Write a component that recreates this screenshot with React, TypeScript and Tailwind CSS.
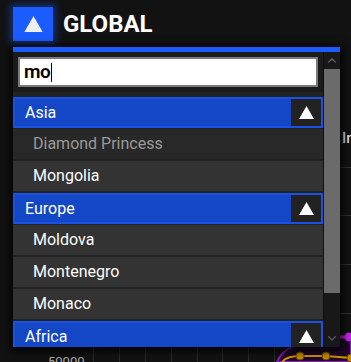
import React from 'react';

type Group = {
  name: string;
  items: { name: string; noData?: boolean }[];
};

const groups: Group[] = [
  { name: 'Asia', items: [{ name: 'Diamond Princess', noData: true }, { name: 'Mongolia' }] },
  { name: 'Europe', items: [{ name: 'Moldova' }, { name: 'Montenegro' }, { name: 'Monaco' }] },
  { name: 'Africa', items: [{ name: 'Morocco' }, { name: 'Mozambique' }] },
];

const UpTriangle = ({ className }: { className?: string }) => (
  <svg viewBox="0 0 16 14" className={className}>
    <polygon points="8,0 16,14 0,14" fill="currentColor" />
  </svg>
);

const App: React.FC = () => {
  return (
    <div className="relative flex flex-col w-[351px] h-[362px] overflow-hidden bg-[#121212] font-['Roboto',sans-serif]">
      {/* Header */}
      <div className="flex items-center gap-[10px] h-[47px] pl-[13px] pb-[6px] pt-[7px] shrink-0">
        <button className="flex items-center justify-center w-[40px] h-[34px] bg-[#1a5cff] text-[#eeeeee] shadow-[0_0_7px_3px_rgba(26,92,255,0.4)]">
          <UpTriangle className="w-[19px] h-[16px]" />
        </button>
        <span className="text-white font-bold text-[24px] leading-none">GLOBAL</span>
      </div>

      {/* Page content behind the dropdown */}
      <div className="flex flex-1 min-h-0">
        <div className="flex-1" />
        <div className="w-[11px] overflow-hidden text-[#dddddd]">
          <div className="h-[121px] pt-[82px] pl-[2px] border-b border-[#333] whitespace-nowrap text-[15px] font-medium leading-[18px]">
            Infected
          </div>
          <div className="h-[48px] border-b border-[#333]" />
          <div className="h-[49px] border-b border-[#333]" />
          <div className="h-[49px] border-b border-[#333]" />
        </div>
      </div>
      <svg width="351" height="45" className="block shrink-0">
        {[93, 119, 145, 171, 197, 222, 248, 274].map((x) => (
          <line key={x} x1={x + 0.5} y1="0" x2={x + 0.5} y2="45" stroke="#2a2a2a" strokeWidth="1" />
        ))}
        <path d="M277 45 C 282 32, 300 22, 330 20 L 351 20 L 351 45 Z" fill="#1d0828" stroke="#8e1cb8" strokeWidth="2" />
        <line x1="330" y1="20" x2="351" y2="20" stroke="#b320d8" strokeWidth="3" />
        <circle cx="349" cy="20" r="4.5" fill="#c624e8" />
        <path d="M282 45 C 286 40, 292 39, 300 39 L 326 39 L 351 41" fill="none" stroke="#d99a00" strokeWidth="2" />
        <circle cx="300" cy="39" r="4" fill="#c88c00" stroke="#6b4a00" strokeWidth="1" />
        <circle cx="326" cy="39" r="4" fill="#c88c00" stroke="#6b4a00" strokeWidth="1" />
        <circle cx="351" cy="41" r="4" fill="#c88c00" stroke="#6b4a00" strokeWidth="1" />
        <text x="48" y="49" fontSize="13" fill="#aaaaaa" fontFamily="Roboto, sans-serif">50000</text>
      </svg>

      {/* Dropdown panel */}
      <div className="absolute left-[13px] top-[47px] w-[327px] h-[300px] flex border-t-[5px] border-[#1a5cff] bg-[#1b1b1b] shadow-[0_2px_8px_3px_rgba(0,0,0,0.75)]">
        <div className="flex flex-col w-[310px] min-h-0">
          <div className="p-[5px] pb-0">
            <div className="flex items-center h-[30px] pl-[4px] bg-white border-2 border-[#7a7a7a] text-black text-[19px] font-semibold tracking-[-0.6px]">
              <span>mo</span>
              <span className="w-[1px] h-[19px] bg-black ml-[1px]" />
            </div>
          </div>
          <div className="flex-1 min-h-0 overflow-hidden mt-[5px] pt-[5px] bg-[#222]">
            {groups.map((g) => (
              <div key={g.name}>
                <div className="flex items-center justify-between h-[31px] pl-[10px] bg-[#1447c6] border-2 border-[#1a52e6] text-white text-[16px]">
                  <span>{g.name}</span>
                  <span className="flex items-center justify-center w-[30px] h-[27px] bg-[#222] text-white">
                    <UpTriangle className="w-[15px] h-[13px]" />
                  </span>
                </div>
                {g.items.map((it, i) => (
                  <div
                    key={it.name}
                    className={`flex items-center h-[32px] pl-[20px] border-b-2 border-[#222] text-[16px] ${
                      i === 0 ? 'h-[33px] border-t' : ''
                    } ${it.noData ? 'bg-[#282828] text-[#9a9a9a]' : 'bg-[#333] text-white'}`}
                  >
                    {it.name}
                  </div>
                ))}
              </div>
            ))}
          </div>
        </div>
        <div className="w-[1px] bg-[#0e0e0e]" />
        {/* Scrollbar */}
        <div className="flex flex-col w-[16px] bg-[#181818]">
          <div className="flex items-center justify-center h-[17px] text-[#6a6a6a]">
            <svg viewBox="0 0 8 5" className="w-[8px] h-[5px]">
              <polygon points="4,0 8,4 8,5 4,2 0,5 0,4" fill="currentColor" />
            </svg>
          </div>
          <div className="h-[224px] bg-[#6b6b6b]" />
          <div className="flex-1" />
          <div className="flex items-center justify-center h-[17px] text-[#555]">
            <svg viewBox="0 0 8 5" className="w-[8px] h-[5px]">
              <polyline points="0,0 4,4 8,0" fill="none" stroke="currentColor" strokeWidth="1.4" />
            </svg>
          </div>
        </div>
      </div>
    </div>
  );
};

export default App;
